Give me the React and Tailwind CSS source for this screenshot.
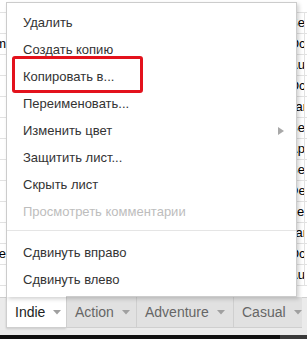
import React from "react";

const rows = [
  { left: "", right: "Sep" },
  { left: "Platform", right: "Oct" },
  { left: "", right: "Aug" },
  { left: "", right: "Oct" },
  { left: "", right: "Jan" },
  { left: "", right: "Sep" },
  { left: "", right: "Apr" },
  { left: "", right: "Sep" },
  { left: "", right: "Dec" },
  { left: "", right: "Feb" },
  { left: "", right: "Jan" },
  { left: "Simulate", right: "Oct" },
  { left: "", right: "Aug" },
];

const items = [
  { label: "Удалить" },
  { label: "Создать копию" },
  { label: "Копировать в..." },
  { label: "Переименовать..." },
  { label: "Изменить цвет", sub: true },
  { label: "Защитить лист..." },
  { label: "Скрыть лист" },
  { label: "Просмотреть комментарии", disabled: true },
];

const tabs = [
  { name: "Indie", w: "w-[60px]", active: true },
  { name: "Action", w: "w-[70px]" },
  { name: "Adventure", w: "w-[97px]" },
  { name: "Casual", w: "w-[69px]" },
];

function Caret({ color }) {
  return (
    <svg width="8" height="5" viewBox="0 0 8 5">
      <polygon points="0,0 8,0 4,4.5" fill={color} />
    </svg>
  );
}

function MenuItem({ label, sub, disabled }) {
  return (
    <div className="h-[27px] flex items-center justify-between pl-[16px] pr-[12px]">
      <span className={disabled ? "text-[#bdbdbd]" : "text-[#333]"}>{label}</span>
      {sub && (
        <svg width="6" height="8" viewBox="0 0 6 8">
          <polygon points="0,0 6,4 0,8" fill="#a8a8a8" />
        </svg>
      )}
    </div>
  );
}

export default function App() {
  return (
    <div className="relative w-[307px] h-[339px] overflow-hidden bg-white font-['Liberation_Sans',Arial,sans-serif]">
      {/* sheet grid behind the menu */}
      <div className="h-[297px] flex flex-col">
        <div className="h-[13px] border-b border-[#e2e2e2] shrink-0" />
        {rows.map((r, i) => (
          <div key={i} className="h-[21px] shrink-0 flex border-b border-[#e2e2e2] text-[13px] text-black leading-[20px]">
            <div className="w-[6px] overflow-hidden flex justify-end">
              <span className="shrink-0 whitespace-nowrap">{r.left}</span>
            </div>
            <div className="w-[283px]" />
            <div className="w-[16px] border-r border-[#e2e2e2] overflow-hidden whitespace-nowrap">{r.right}</div>
          </div>
        ))}
      </div>

      {/* sheet tabs */}
      <div className="h-[38px] bg-[#ebebeb] border-t border-[#cfcfcf] flex pl-[6px] items-start">
        {tabs.map((t) => (
          <div
            key={t.name}
            className={
              "h-[31px] -mt-px flex items-center gap-[8px] pl-[8px] text-[14px] border-l border-[#cfcfcf] " +
              t.w +
              (t.active
                ? " bg-white text-[#222] border-b shadow-[0_1px_2px_rgba(0,0,0,0.15)]"
                : " bg-[#e1e1e1] text-[#666] border-b")
            }
          >
            <span>{t.name}</span>
            <Caret color="#a0a0a0" />
          </div>
        ))}
      </div>
      <div className="absolute left-0 bottom-0 w-[307px] h-[4px] flex">
        <div className="w-[280px] bg-[#111]" />
        <div className="flex-1 bg-[#3a3a3a]" />
      </div>

      {/* context menu */}
      <div className="absolute left-[6px] top-[2px] w-[291px] h-[295px] bg-white border border-b-0 border-[#cccccc] shadow-[2px_2px_4px_rgba(0,0,0,0.18)] text-[13px] pt-[6px]">
        {items.map((it) => (
          <MenuItem key={it.label} {...it} />
        ))}
        <div className="mt-[5px] border-t border-[#e5e5e5]" />
        <div className="pt-[8px]">
          <MenuItem label="Сдвинуть вправо" />
          <MenuItem label="Сдвинуть влево" />
        </div>
        <div className="absolute left-[5px] top-[53px] w-[131px] h-[37px] border-[3px] border-[#e3121c] rounded-[3px]" />
      </div>
      <div className="absolute left-[66px] top-[296px] w-[231px] h-px bg-[#cccccc]" />
    </div>
  );
}
